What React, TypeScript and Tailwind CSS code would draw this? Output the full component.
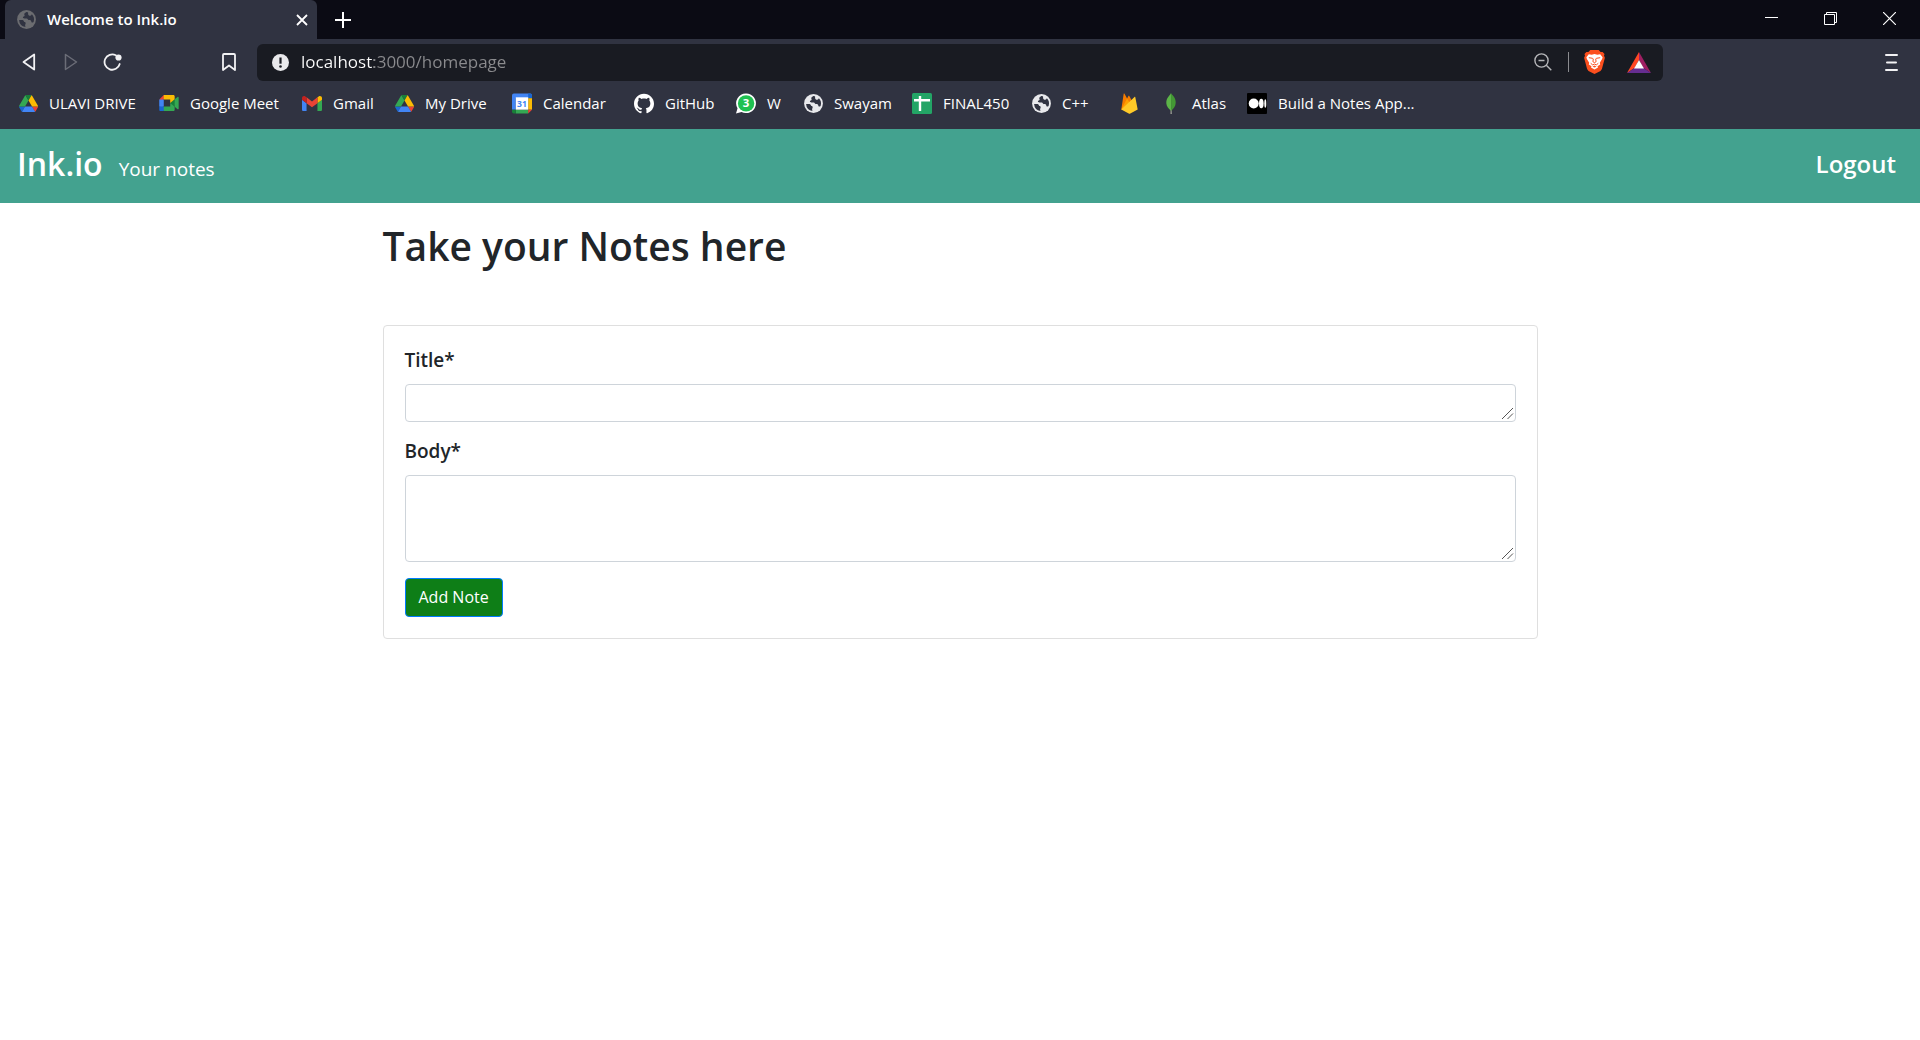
import type { ReactNode } from "react";
import { SiGithub } from "react-icons/si";

function DriveIcon() {
  return (
    <svg viewBox="0 0 87 78" className="h-[17px] w-[19px]" aria-hidden="true">
      <path d="M6.6 66.85l3.85 6.65c.8 1.4 1.95 2.5 3.3 3.3l13.75-23.8H0c0 1.55.4 3.1 1.2 4.5z" fill="#1967d2" />
      <path d="M43.65 25L29.9 1.2c-1.35.8-2.5 1.9-3.3 3.3L1.2 48.5C.4 49.9 0 51.45 0 53h27.5z" fill="#34a853" />
      <path d="M73.55 76.8c1.35-.8 2.5-1.9 3.3-3.3l9.25-16c.8-1.4 1.2-2.95 1.2-4.5H59.8l5.85 11.5z" fill="#ea4335" />
      <path d="M43.65 25L57.4 1.2C56.05.4 54.5 0 52.9 0H34.4c-1.6 0-3.15.45-4.5 1.2z" fill="#188038" />
      <path d="M59.8 53H27.5L13.75 76.8c1.35.8 2.9 1.2 4.5 1.2h50.8c1.6 0 3.15-.45 4.5-1.2z" fill="#4285f4" />
      <path d="M73.4 26.5L60.7 4.5c-.8-1.4-1.95-2.5-3.3-3.3L43.65 25 59.8 53h27.45c0-1.55-.4-3.1-1.2-4.5z" fill="#fbbc04" />
    </svg>
  );
}

function MeetIcon() {
  return (
    <svg viewBox="0 0 88 72" className="h-4 w-5" aria-hidden="true">
      <path d="M49.5 36l8.53 9.75 11.47 7.33 2-17.02-2-16.64-11.69 6.44z" fill="#188038" />
      <path d="M0 51.5V66c0 3.3 2.7 6 6 6h14.5l3-10.96-3-9.54-9.95-3z" fill="#1967d2" />
      <path d="M20.5 0L0 20.5l10.55 3 9.95-3 2.95-9.41z" fill="#ea4335" />
      <path d="M0 20.5h20.5v31H0z" fill="#4285f4" />
      <path d="M82.6 8.7L69.5 19.42v33.66l13.16 10.79c1.97 1.54 4.84.14 4.84-2.37V11c0-2.54-2.94-3.92-4.9-2.3z" fill="#34a853" />
      <path d="M49.5 36v15.5h-29V72h43c3.3 0 6-2.7 6-6V53.08z" fill="#34a853" />
      <path d="M63.5 0h-43v20.5h29V36l20-16.57V6c0-3.3-2.7-6-6-6z" fill="#fbbc04" />
    </svg>
  );
}

function GmailIcon() {
  return (
    <svg viewBox="52 42 88 66" className="h-[15px] w-5" aria-hidden="true">
      <path d="M58 108h14V74L52 59v43c0 3.3 2.7 6 6 6" fill="#4285f4" />
      <path d="M120 108h14c3.3 0 6-2.7 6-6V59l-20 15" fill="#34a853" />
      <path d="M120 48v26l20-15v-8c0-7.4-8.5-11.6-14.4-7.2" fill="#fbbc04" />
      <path d="M72 74V48l24 18 24-18v26L96 92" fill="#ea4335" />
      <path d="M52 51v8l20 15V48l-5.6-4.2C60.5 39.4 52 43.6 52 51" fill="#c5221f" />
    </svg>
  );
}

function CalendarIcon() {
  return (
    <svg viewBox="0 0 21 21" className="size-[21px]" aria-hidden="true">
      <path d="M2 0h17a2 2 0 0 1 2 2v3H0V2a2 2 0 0 1 2-2z" fill="#4285f4" />
      <path d="M0 4h4v13H0z" fill="#4285f4" />
      <path d="M17 0h2a2 2 0 0 1 2 2v3h-4z" fill="#1967d2" />
      <path d="M17 5h4v12h-4z" fill="#fbbc04" />
      <path d="M4 17h13v4H4z" fill="#34a853" />
      <path d="M0 17h4v4H2a2 2 0 0 1-2-2z" fill="#188038" />
      <path d="M17 17h4l-4 4z" fill="#ea4335" />
      <path d="M4 4h13v13H4z" fill="#fff" />
      <text x="10.5" y="14" textAnchor="middle" fontFamily="Open Sans, sans-serif" fontSize="9" fontWeight="700" fill="#4285f4">
        31
      </text>
    </svg>
  );
}

function WhatsAppIcon() {
  return (
    <svg viewBox="0 0 21 21" className="size-[21px]" aria-hidden="true">
      <path d="M10.7 0a10.3 10.3 0 1 1-4.9 19.4L0 21l1.6-5.5A10.3 10.3 0 0 1 10.7 0z" fill="#fff" />
      <circle cx="10.6" cy="10.4" r="8.6" fill="#1fc151" />
      <text x="10.6" y="14.6" textAnchor="middle" fontFamily="Open Sans, sans-serif" fontSize="12" fontWeight="700" fill="#fff">
        3
      </text>
    </svg>
  );
}

function GlobeIcon({ land, sea }: { land: string; sea: string }) {
  return (
    <svg viewBox="0 0 19 19" className="size-[19px]" aria-hidden="true">
      <circle cx="9.5" cy="9.5" r="9.4" fill={land} />
      <path
        d="M2.1 10.1h2.6c1.2 0 1.9.5 2.3 1.4.3.7 1.3.5 1.6 1.2.4 1-.6 1.8-.5 2.8 0 .7.3 1.1.4 1.6A7.6 7.6 0 0 1 2.1 10.1z"
        fill={sea}
      />
      <path
        d="M9.2 2c-.3.8-1.6.9-1.9 1.9-.2.8.5 1 .3 1.8-.2.9-1.5.6-1.7 1.5-.1.8.8 1.2 1.6 1.2h2.3c1 0 1 1.2 1.8 1.6.7.4 1.7 0 2.3.6.5.5.2 1.5.9 1.8.5.3 1.3 0 1.8-.5A7.5 7.5 0 0 0 14.9 4.3c-.5.5-.7 1.4-1.7 1.5-1 .1-1.6-.6-2-1.3-.3-.7.2-1.5-.3-2.3z"
        fill={sea}
      />
    </svg>
  );
}

function SheetsIcon() {
  return (
    <svg viewBox="0 0 20 21" className="h-[21px] w-5" aria-hidden="true">
      <rect width="20" height="21" rx="1.5" fill="#23a566" />
      <path d="M2 7.3h16M8 3v15" stroke="#fff" strokeWidth="2.4" />
    </svg>
  );
}

function FirebaseIcon() {
  return (
    <svg viewBox="0 0 17 21" className="h-[21px] w-[17px]" aria-hidden="true">
      <path d="M.3 16.5L2.7.8c.1-.4.6-.5.8-.1l2.6 4.7 1.3-2.4c.2-.4.7-.4.9 0l7.3 13.5z" fill="#f57c00" />
      <path d="M.3 16.5L6.1 5.4l3.6 6z" fill="#ffa000" />
      <path d="M.3 16.5L13.5 4c.3-.3.7-.1.8.3l2.4 12.2-7.4 4.1c-.5.3-1.1.3-1.6 0z" fill="#ffca28" />
    </svg>
  );
}

function MongoIcon() {
  return (
    <svg viewBox="0 0 10 21" className="h-[21px] w-[10px]" aria-hidden="true">
      <path d="M4.6 16h.9l.3 5H4.500z" fill="#a5a79c" />
      <path d="M5 0c.4 1 1 1.500 1.700 2.300C8.800 4.600 9.800 7 9.700 9.800c-.1 3.500-2 5.900-4.500 7.900z" fill="#439934" />
      <path d="M5 0C4.700 1 4.200 1.500 3.500 2.300 1.200 4.800.1 7.300.3 10.200c.2 3.200 2.300 5.700 4.900 7.500z" fill="#5cb548" />
    </svg>
  );
}

function MediumIcon() {
  return (
    <svg viewBox="0 0 20 21" className="h-[21px] w-5" aria-hidden="true">
      <rect width="20" height="21" rx="1" fill="#000" />
      <circle cx="6.7" cy="10.5" r="5" fill="#fff" />
      <ellipse cx="14.3" cy="10.5" rx="2.3" ry="4.8" fill="#fff" />
      <ellipse cx="18.3" cy="10.5" rx="1" ry="4.3" fill="#fff" />
    </svg>
  );
}

function BraveIcon() {
  return (
    <svg viewBox="0 0 21 24" className="h-6 w-[21px]" aria-hidden="true">
      <path d="M6.300 0h8.400l1.900 2.100 2-.1L20.500 4l-.5 1.700.9 2-3 11.300-1.400 2L10.500 24l-6-3-1.400-2L.1 7.700l.9-2L.5 4l1.900-2 2 .1z" fill="#fb4f1e" />
      <path
        d="M4.800 4.300l2.900.5 2.800-.7 2.800.7 2.900-.5 2.400 3-.5 1.800-2.300 3.600.4 1.900-2.700 1.700.5 1.200-3.500 2-3.500-2 .5-1.200-2.700-1.700.4-1.900-2.300-3.600-.5-1.800z"
        fill="#fff"
      />
      <path
        d="M4.800 7.700l3.800.6.7.7-.4 2.700 1.600.9 1.600-.9-.4-2.700.7-.7 3.800-.6M6.700 13.300l2 1.600 1.800-.8 1.800.8 2-1.600"
        fill="none"
        stroke="#fb4f1e"
        strokeWidth="1"
      />
      <path d="M8.500 16.700l2-1.100 2 1.100-2 .9z" fill="#fb4f1e" />
    </svg>
  );
}

type Bookmark = { label: string; name?: string; icon: ReactNode; width: string };

const bookmarks: Bookmark[] = [
  { label: "ULAVI DRIVE", icon: <DriveIcon />, width: "w-[141px]" },
  { label: "Google Meet", icon: <MeetIcon />, width: "w-[143px]" },
  { label: "Gmail", icon: <GmailIcon />, width: "w-[92px]" },
  { label: "My Drive", icon: <DriveIcon />, width: "w-[118px]" },
  { label: "Calendar", icon: <CalendarIcon />, width: "w-[122px] gap-4" },
  { label: "GitHub", icon: <SiGithub className="size-[21px]" />, width: "w-[102px]" },
  { label: "W", icon: <WhatsAppIcon />, width: "w-[67px]" },
  { label: "Swayam", icon: <GlobeIcon land="#e8e9ec" sea="#303341" />, width: "w-[109px]" },
  { label: "FINAL450", icon: <SheetsIcon />, width: "w-[119px]" },
  { label: "C++", icon: <GlobeIcon land="#e8e9ec" sea="#303341" />, width: "w-[88px]" },
  { label: "", name: "Firebase", icon: <FirebaseIcon />, width: "w-[42px]" },
  { label: "Atlas", icon: <MongoIcon />, width: "w-[86px]" },
  { label: "Build a Notes App...", icon: <MediumIcon />, width: "w-[180px]" },
];

function TabStrip() {
  return (
    <div className="flex h-[39px] items-stretch bg-[#0b0b14] pl-[5px]">
      <div className="flex w-[312px] items-center rounded-t-md bg-[#303341] pl-3 pr-[7px]">
        <GlobeIcon land="#6b6c70" sea="#303341" />
        <span className="ml-[11px] flex-1 text-[15px] font-semibold">Welcome to Ink.io</span>
        <button type="button" aria-label="Close tab" className="p-[2px]">
          <svg viewBox="0 0 12 12" className="size-3" aria-hidden="true">
            <path d="M1 1l10 10M11 1L1 11" stroke="#fff" strokeWidth="1.800" />
          </svg>
        </button>
      </div>
      <button type="button" aria-label="New tab" className="ml-[18px] self-center">
        <svg viewBox="0 0 16 16" className="size-4" aria-hidden="true">
          <path d="M8 0v16M0 8h16" stroke="#fff" strokeWidth="2" />
        </svg>
      </button>
      <div className="ml-auto flex items-center gap-[46px] pr-6 pb-0.5">
        <button type="button" aria-label="Minimize">
          <svg viewBox="0 0 13 13" className="size-[13px]" aria-hidden="true">
            <path d="M0 5.5h13" stroke="#fff" />
          </svg>
        </button>
        <button type="button" aria-label="Restore">
          <svg viewBox="0 0 13 13" className="size-[13px]" aria-hidden="true">
            <path d="M.5 2.5h10v10H.5zM2.5 2.5v-2h10v10h-2" fill="none" stroke="#fff" />
          </svg>
        </button>
        <button type="button" aria-label="Close window">
          <svg viewBox="0 0 13 13" className="size-[13px]" aria-hidden="true">
            <path d="M0 0l13 13M13 0L0 13" stroke="#fff" strokeWidth="1.2" />
          </svg>
        </button>
      </div>
    </div>
  );
}

function Toolbar() {
  return (
    <div className="flex h-[46px] items-center px-[22px]">
      <button type="button" aria-label="Back">
        <svg viewBox="0 0 14 18" className="h-[18px] w-[14px]" aria-hidden="true">
          <path d="M12.2 1.5v15L1.5 9z" fill="none" stroke="#f2f2f4" strokeWidth="1.8" strokeLinejoin="round" />
        </svg>
      </button>
      <button type="button" aria-label="Forward" className="ml-7">
        <svg viewBox="0 0 14 18" className="h-[18px] w-[14px]" aria-hidden="true">
          <path d="M1.5 1.5v15L12.5 9z" fill="none" stroke="#6b6d77" strokeWidth="1.5" strokeLinejoin="round" />
        </svg>
      </button>
      <button type="button" aria-label="Reload" className="ml-[25px]">
        <svg viewBox="0 0 19 18" className="h-[18px] w-[19px]" aria-hidden="true">
          <path d="M12.8 2.2A7.7 7.7 0 1 0 16.7 11" fill="none" stroke="#f2f2f4" strokeWidth="1.8" strokeLinecap="round" />
          <circle cx="15.5" cy="4.5" r="3.1" fill="#f2f2f4" />
        </svg>
      </button>
      <button type="button" aria-label="Bookmark this page" className="ml-[100px]">
        <svg viewBox="0 0 14 18" className="h-[18px] w-[14px]" aria-hidden="true">
          <path d="M1 2a1 1 0 0 1 1-1h10a1 1 0 0 1 1 1v15l-6-4.500L1 17z" fill="none" stroke="#f2f2f4" strokeWidth="1.8" strokeLinejoin="round" />
        </svg>
      </button>
      <div className="ml-[21px] mr-[222px] flex h-[37px] flex-1 items-center rounded-md bg-[#191b22] pl-[15px] pr-3">
        <svg viewBox="0 0 17 17" className="size-[17px]" aria-hidden="true">
          <circle cx="8.5" cy="8.5" r="8.5" fill="#e9e9ec" />
          <path d="M8.5 3.5v6.2" stroke="#191b22" strokeWidth="2.2" />
          <circle cx="8.5" cy="12.5" r="1.3" fill="#191b22" />
        </svg>
        <input
          type="text"
          aria-label="Address"
          defaultValue="localhost:3000/homepage"
          className="ml-3 min-w-0 flex-1 bg-[linear-gradient(90deg,#fff_73px,#8b8b8e_73px)] bg-clip-text text-[17px] text-transparent caret-white outline-none"
        />
        <button type="button" aria-label="Zoom">
          <svg viewBox="0 0 18 18" className="size-[18px]" fill="none" stroke="#b5b6b9" strokeWidth="1.4" aria-hidden="true">
            <circle cx="7.5" cy="7.5" r="6.6" />
            <path d="M12.3 12.3l5 5M4.5 7.5h6" />
          </svg>
        </button>
        <span className="mr-[15px] ml-4 h-5 w-px bg-[#8b8c90]" />
        <button type="button" aria-label="Brave Shields">
          <BraveIcon />
        </button>
        <button type="button" aria-label="Brave Rewards" className="ml-[22px]">
          <svg viewBox="0 0 24 21" className="h-[21px] w-6" aria-hidden="true">
            <path d="M12 0L0 21l7.500-5L12 8z" fill="#ff4724" />
            <path d="M12 0l12 21-7.500-5L12 8z" fill="#9e1f63" />
            <path d="M0 21h24l-7.500-5h-9z" fill="#662d91" />
            <path d="M12 8l5 8.500H7z" fill="#fff" />
          </svg>
        </button>
      </div>
      <button type="button" aria-label="Menu">
        <svg viewBox="0 0 13 17" className="h-[17px] w-[13px]" aria-hidden="true">
          <path d="M1 1h11M2 8.5h9M1 16h11" stroke="#f2f2f4" strokeWidth="2" strokeLinecap="round" />
        </svg>
      </button>
    </div>
  );
}

function BookmarksBar() {
  return (
    <nav aria-label="Bookmarks" className="flex h-11 items-center overflow-hidden pb-2 pl-[18px]">
      {bookmarks.map((b, i) => (
        <a key={i} href="#" aria-label={b.name} className={`flex shrink-0 items-center gap-[11px] text-[15px] whitespace-nowrap ${b.width}`}>
          <span className="flex h-6 w-5 shrink-0 items-center justify-center">{b.icon}</span>
          {b.label}
        </a>
      ))}
    </nav>
  );
}

function NoteField({ id, label, rows, height }: { id: string; label: string; rows: number; height: string }) {
  return (
    <div className="mb-4">
      <label htmlFor={id} className="mb-[11px] block text-[19px] leading-[26px] font-semibold">
        {label}
      </label>
      <div className="relative">
        <textarea
          id={id}
          rows={rows}
          className={`block w-full rounded border border-[#ced4da] px-3 py-1.5 outline-none focus:border-[#80bdff] ${height}`}
        />
        <svg viewBox="0 0 13 13" className="pointer-events-none absolute right-[2px] bottom-[2px] size-[13px] bg-white" aria-hidden="true">
          <path d="M1 12L12 1M6.500 12L12 6.500" stroke="#555" />
        </svg>
      </div>
    </div>
  );
}

export default function App() {
  return (
    <div className="min-h-screen bg-white font-['Open_Sans',sans-serif] text-[#212529]">
      <div className="bg-[#303341] text-white">
        <TabStrip />
        <Toolbar />
        <BookmarksBar />
      </div>
      <header className="flex h-[74px] items-center justify-between bg-[#43a28f] pr-6 pb-1 pl-[17px] text-white">
        <div className="flex items-baseline gap-4">
          <a href="#" className="text-[32px] font-semibold">Ink.io</a>
          <a href="#" className="text-[19px]">Your notes</a>
        </div>
        <a href="#" className="text-2xl font-semibold">Logout</a>
      </header>
      <main className="mx-auto w-full max-w-[1155px] pt-4">
        <h1 className="text-[39px] leading-[54px] font-semibold">Take your Notes here</h1>
        <form className="mt-[52px] rounded border border-[#dfdfdf] p-[21px]" onSubmit={(e) => e.preventDefault()}>
          <NoteField id="title" label="Title*" rows={1} height="h-[38px]" />
          <NoteField id="body" label="Body*" rows={3} height="h-[87px]" />
          <button type="submit" className="block rounded border border-[#007bff] bg-[#0e7e17] px-[13px] py-1.5 text-base leading-[25px] text-white">
            Add Note
          </button>
        </form>
      </main>
    </div>
  );
}
